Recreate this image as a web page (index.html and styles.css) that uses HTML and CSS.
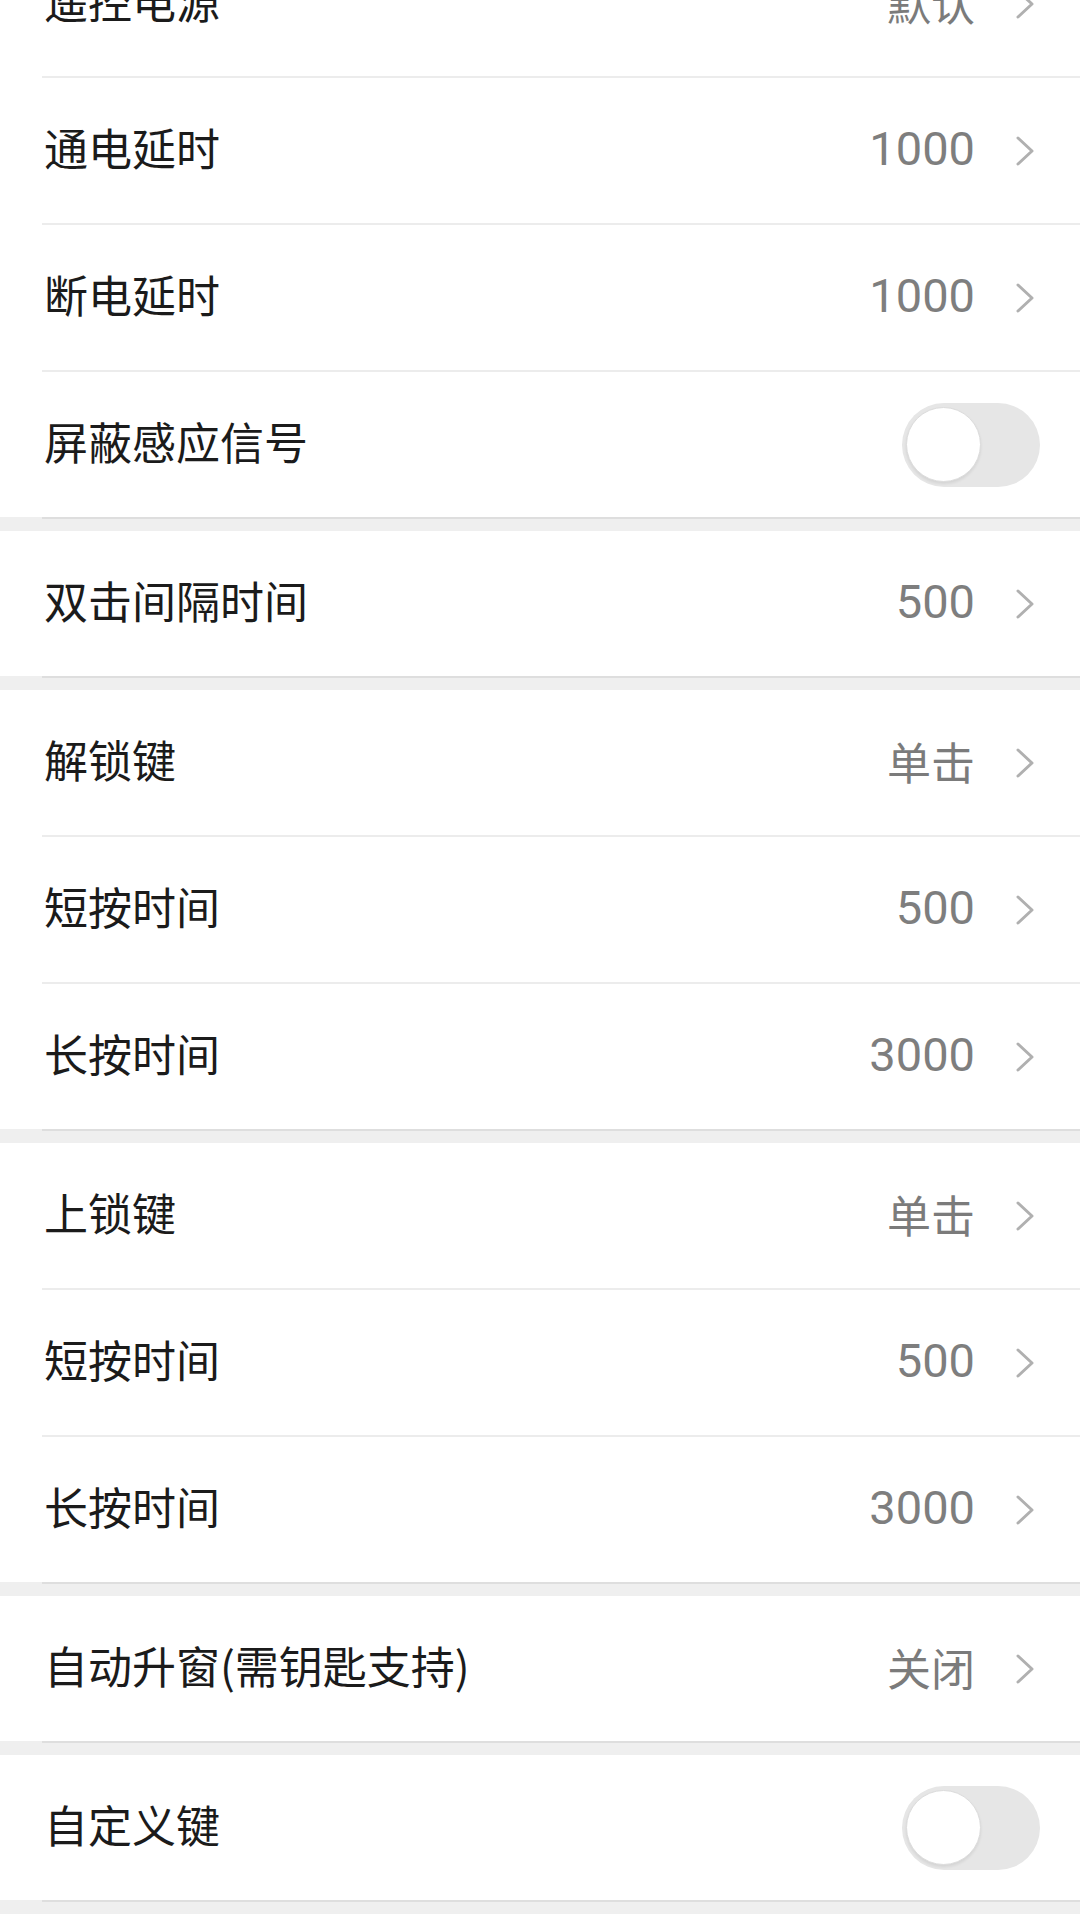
FILE: index.html
```html
<!DOCTYPE html>
<html lang="zh-CN">
<head>
<meta charset="utf-8">
<title>设置</title>
<link rel="stylesheet" href="styles.css">
</head>
<body>
<svg class="defs" width="0" height="0" aria-hidden="true">
  <symbol id="chev" viewBox="0 0 20 30"><polyline points="3,2 17,15 3,28" fill="none" stroke="currentColor" stroke-width="3" stroke-linecap="round" stroke-linejoin="round"/></symbol>
</svg>
<main class="list">
  <section class="group">
    <div class="row"><div class="row-body"><span class="label">遥控电源</span><span class="value">默认</span><svg class="chev"><use href="#chev"/></svg></div></div>
    <div class="row"><div class="row-body"><span class="label">通电延时</span><span class="value num">1000</span><svg class="chev"><use href="#chev"/></svg></div></div>
    <div class="row"><div class="row-body"><span class="label">断电延时</span><span class="value num">1000</span><svg class="chev"><use href="#chev"/></svg></div></div>
    <div class="row"><div class="row-body"><span class="label">屏蔽感应信号</span><span class="toggle"><span class="knob"></span></span></div></div>
  </section>
  <section class="group">
    <div class="row"><div class="row-body"><span class="label">双击间隔时间</span><span class="value num">500</span><svg class="chev"><use href="#chev"/></svg></div></div>
  </section>
  <section class="group">
    <div class="row"><div class="row-body"><span class="label">解锁键</span><span class="value">单击</span><svg class="chev"><use href="#chev"/></svg></div></div>
    <div class="row"><div class="row-body"><span class="label">短按时间</span><span class="value num">500</span><svg class="chev"><use href="#chev"/></svg></div></div>
    <div class="row"><div class="row-body"><span class="label">长按时间</span><span class="value num">3000</span><svg class="chev"><use href="#chev"/></svg></div></div>
  </section>
  <section class="group">
    <div class="row"><div class="row-body"><span class="label">上锁键</span><span class="value">单击</span><svg class="chev"><use href="#chev"/></svg></div></div>
    <div class="row"><div class="row-body"><span class="label">短按时间</span><span class="value num">500</span><svg class="chev"><use href="#chev"/></svg></div></div>
    <div class="row"><div class="row-body"><span class="label">长按时间</span><span class="value num">3000</span><svg class="chev"><use href="#chev"/></svg></div></div>
  </section>
  <section class="group">
    <div class="row"><div class="row-body"><span class="label">自动升窗(需钥匙支持)</span><span class="value">关闭</span><svg class="chev"><use href="#chev"/></svg></div></div>
  </section>
  <section class="group">
    <div class="row"><div class="row-body"><span class="label">自定义键</span><span class="toggle"><span class="knob"></span></span></div></div>
  </section>
  <section class="group">
    <div class="row"><div class="row-body"></div></div>
  </section>
</main>
</body>
</html>
```
FILE: styles.css
```css
html, body {
  margin: 0;
  padding: 0;
  background: #efefef;
}
body {
  width: 1080px;
  height: 1920px;
  overflow: hidden;
  font-family: "Noto Sans CJK SC", "Noto Sans", sans-serif;
}
.defs {
  position: absolute;
  width: 0;
  height: 0;
}
.list {
  margin-top: -69px;
  display: flex;
  flex-direction: column;
  gap: 12px;
}
.group {
  display: flex;
  flex-direction: column;
  background: #fff;
}
.row {
  padding-left: 42px;
  background: #fff;
}
.group .row:last-child {
  background: linear-gradient(#fff calc(100% - 2px), #efefef 0);
}
.row-body {
  box-sizing: border-box;
  height: 147px;
  display: flex;
  align-items: center;
  padding-left: 2px;
  padding-right: 40px;
  border-bottom: 2px solid #ececec;
}
.group .row:last-child .row-body {
  border-bottom-color: #dedede;
}
.label {
  flex: 1;
  font-size: 44px;
  line-height: 1;
  color: #1b1b1b;
  padding-bottom: 8px;
}
.value {
  font-size: 44px;
  line-height: 1;
  color: #7b7b7b;
  margin-right: 40px;
  padding-bottom: 4px;
}
.value.num {
  font-family: Roboto, "Noto Sans", sans-serif;
  font-size: 47px;
  color: #7e7e7e;
  padding-bottom: 4px;
}
.chev {
  width: 20px;
  height: 30px;
  color: #b0b0b0;
  margin-right: 5px;
}
.toggle {
  box-sizing: border-box;
  width: 138px;
  height: 84px;
  border-radius: 42px;
  background: #e6e6e6;
  display: flex;
  align-items: center;
  padding-left: 4px;
}
.knob {
  box-sizing: border-box;
  width: 75px;
  height: 75px;
  border-radius: 50%;
  background: #fff;
  border: 1px solid #dcdcdc;
  box-shadow: 0 2px 3px rgba(0, 0, 0, 0.08);
}
```
